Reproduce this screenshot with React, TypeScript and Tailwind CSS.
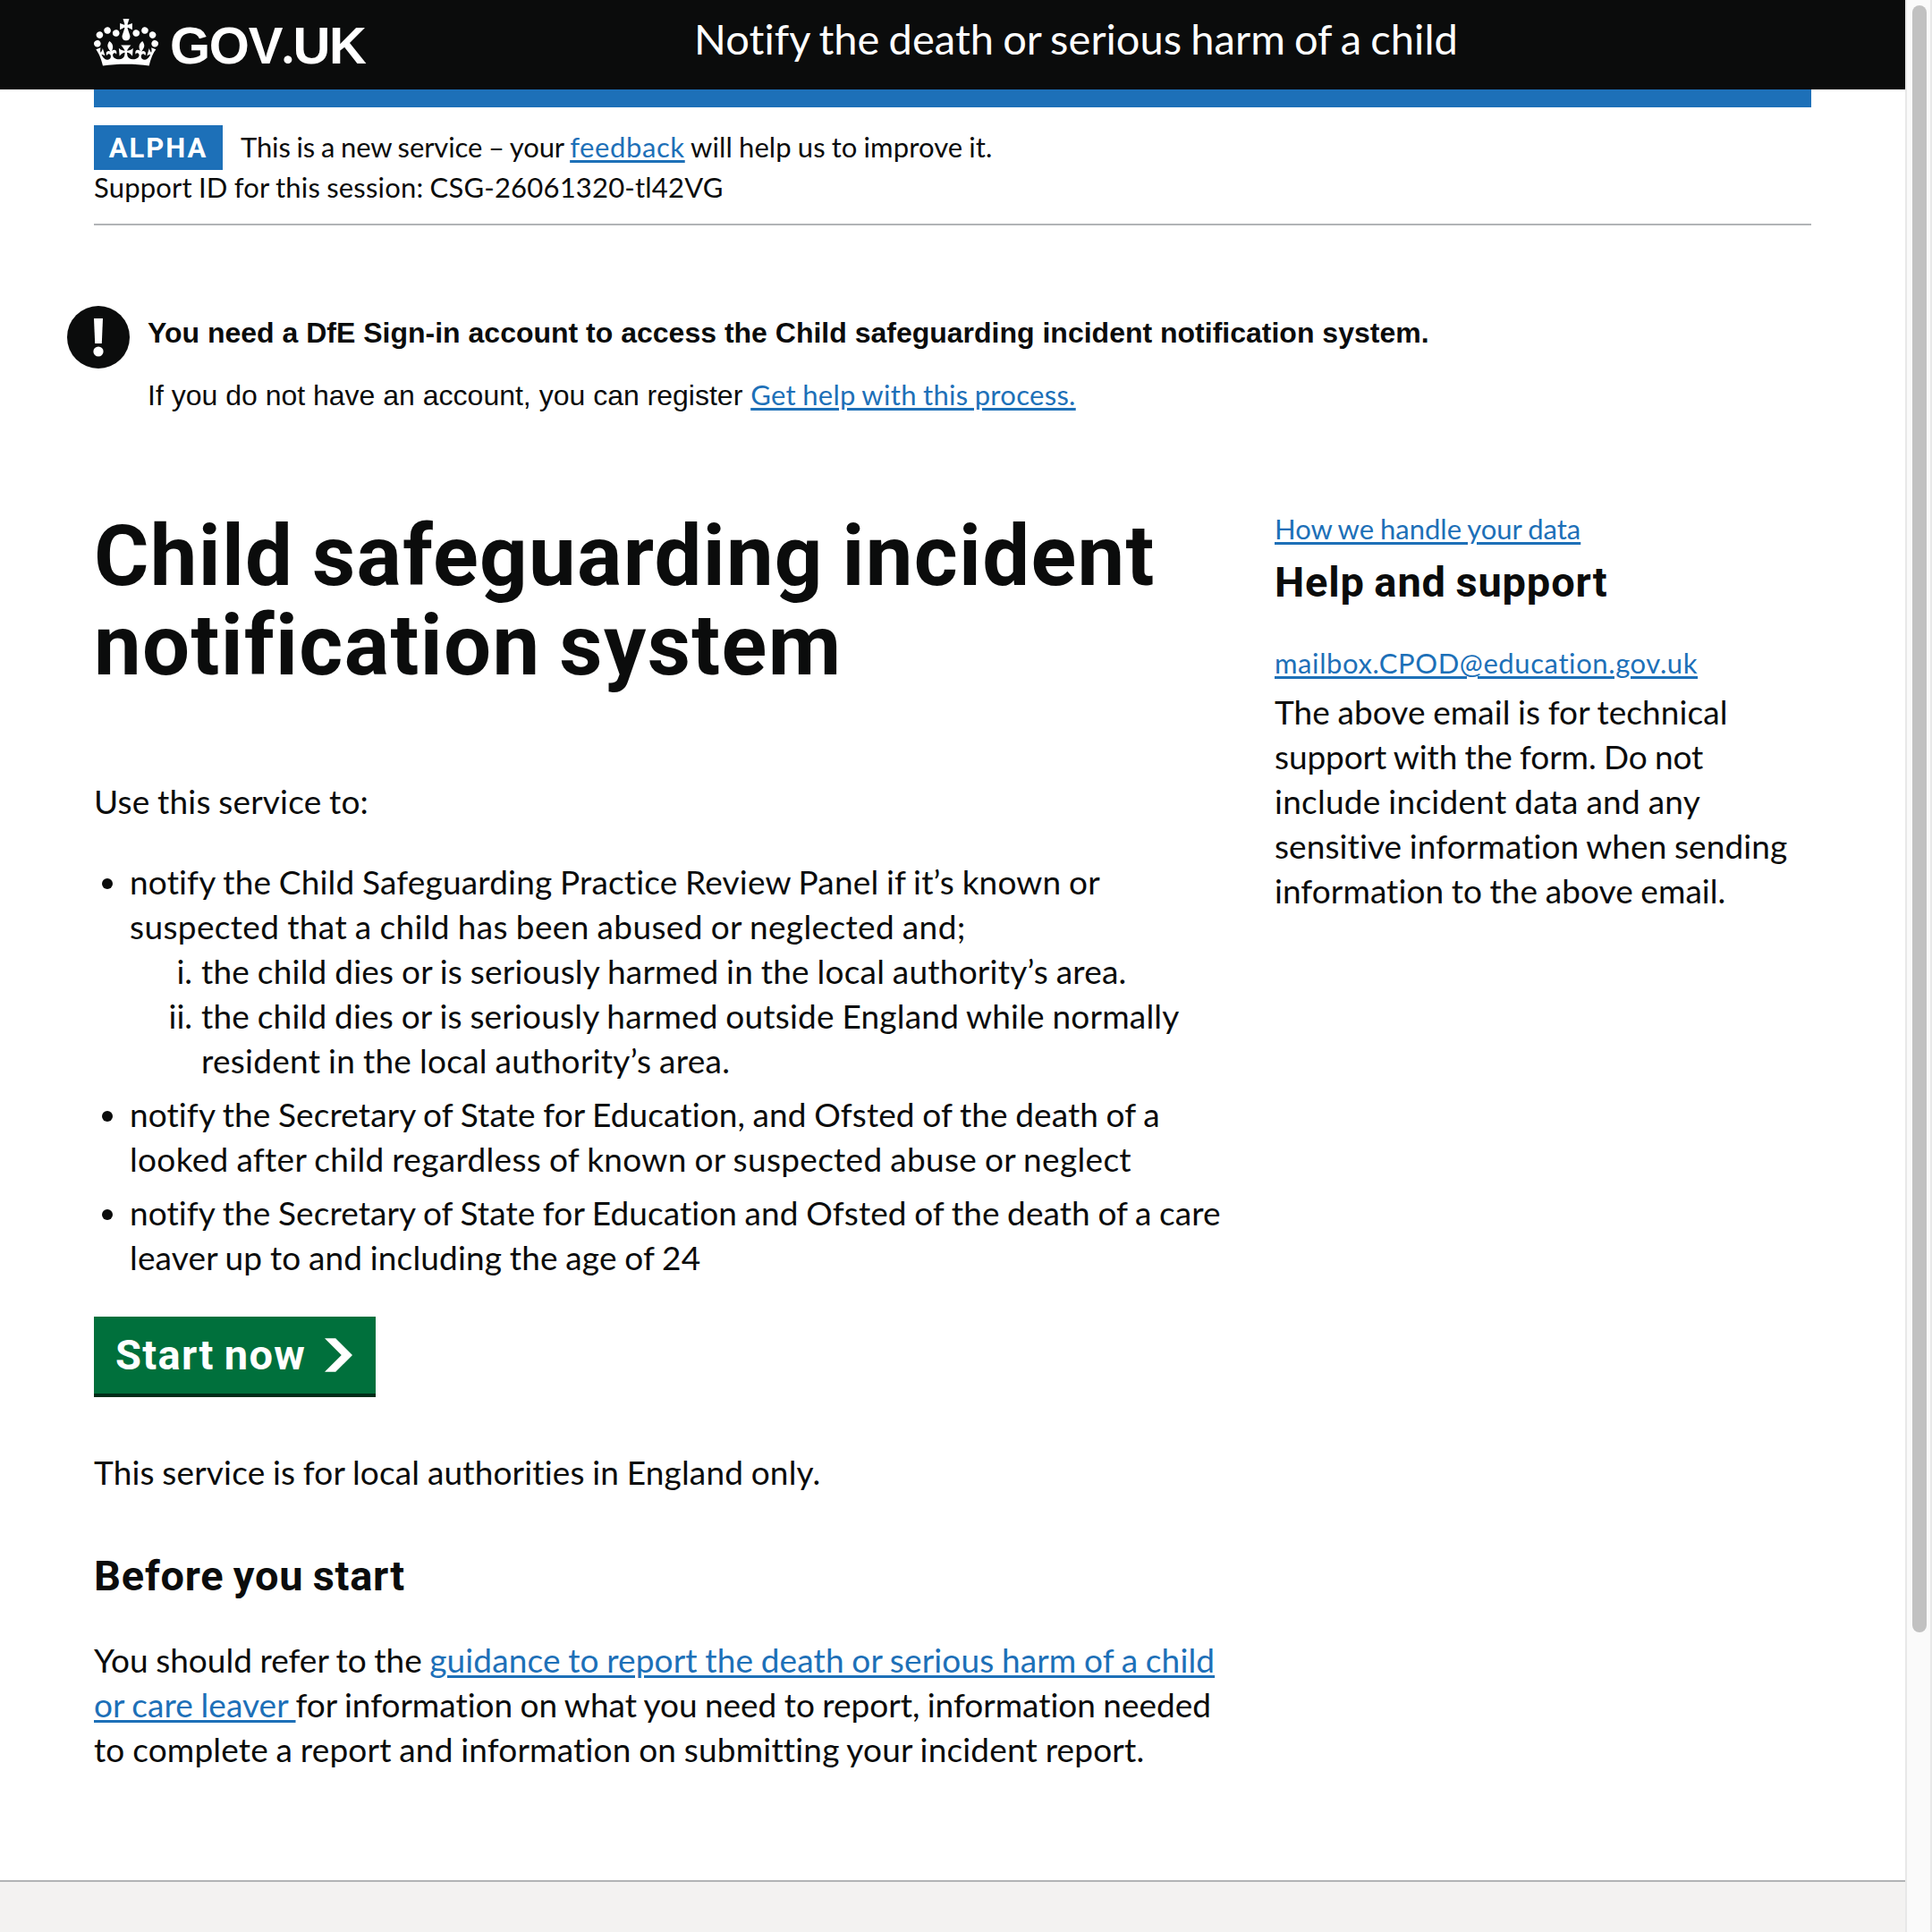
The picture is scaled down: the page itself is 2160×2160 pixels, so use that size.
import type { ReactNode } from "react";

const body = "text-[37px] leading-[50px] [word-spacing:-1px]";
const small = "text-[31px] leading-[40px] [word-spacing:-1px]";
const headingM = "font-['Roboto'] text-[47px] font-bold leading-[50px] [word-spacing:-2px]";
const link =
  "text-[#1d70b8] underline decoration-[3px] underline-offset-[3px] [text-decoration-skip-ink:auto]";

function Line({ track = "", children }: { track?: string; children: ReactNode }) {
  return <span className={`block whitespace-nowrap ${track}`}>{children}</span>;
}

function Crown() {
  return (
    <svg viewBox="0 0 132 97" className="h-[53px] w-[72px]" fill="#ffffff" aria-hidden="true">
      <path
        fillRule="evenodd"
        d="M25 30.2c3.5 1.5 7.7-.2 9.1-3.7 1.5-3.6-.2-7.8-3.9-9.2-3.6-1.4-7.6.3-9.1 3.9-1.4 3.5.3 7.5 3.9 9zM9 39.5c3.6 1.5 7.8-.2 9.2-3.7 1.5-3.6-.2-7.8-3.9-9.1-3.6-1.5-7.6.2-9.1 3.8-1.4 3.5.3 7.5 3.8 9zM4.4 57.2c3.5 1.5 7.7-.2 9.1-3.8 1.5-3.6-.2-7.7-3.9-9.1-3.5-1.5-7.6.3-9.1 3.8-1.4 3.5.3 7.6 3.9 9.1zm38.3-21.4c3.5 1.5 7.7-.2 9.1-3.8 1.5-3.6-.2-7.7-3.9-9.1-3.6-1.5-7.6.3-9.1 3.8-1.3 3.6.4 7.7 3.9 9.1zm64.4-5.6c-3.6 1.5-7.8-.2-9.1-3.7-1.5-3.6.2-7.8 3.8-9.2 3.6-1.4 7.7.3 9.2 3.9 1.3 3.5-.4 7.5-3.9 9zm15.9 9.3c-3.6 1.5-7.7-.2-9.1-3.7-1.5-3.6.2-7.8 3.7-9.1 3.6-1.5 7.7.2 9.2 3.8 1.5 3.5-.3 7.5-3.8 9zm4.7 17.7c-3.6 1.5-7.8-.2-9.2-3.8-1.5-3.6.2-7.7 3.9-9.1 3.6-1.5 7.7.3 9.2 3.8 1.3 3.5-.4 7.6-3.9 9.1zM89.3 35.8c-3.6 1.5-7.8-.2-9.2-3.8-1.4-3.6.2-7.7 3.9-9.1 3.6-1.5 7.7.3 9.2 3.8 1.4 3.6-.3 7.7-3.9 9.1zM69.7 17.7l8.9 4.7V9.3l-8.9 2.8c-.2-.3-.5-.6-.9-.9L72.4 0H59.6l3.5 11.2c-.3.3-.6.5-.9.9l-8.8-2.8v13.1l8.8-4.7c.3.3.6.7.9.9l-5 15.4v.1c-.2.8-.4 1.6-.4 2.4 0 4.1 3.1 7.5 7 8.1h.2c.3 0 .7.1 1 .1.4 0 .7 0 1-.1h.2c4-.6 7.1-4.1 7.1-8.1 0-.8-.1-1.7-.4-2.4V34l-5.1-15.4c.4-.2.7-.6 1-.9zM66 92.8c16.9 0 32.8 1.1 47.1 3.2 4-16.9 8.9-26.7 14-33.5l-9.6-3.4c1 4.9 1.1 7.2 0 10.2-1.5-1.4-3-4.3-4.2-8.7L108.6 76c2.8-2 5-3.2 7.5-3.3-4.4 9.4-10 11.9-13.6 11.2-4.3-.8-6.3-4.6-5.6-7.9 1-4.7 5.7-5.9 8-.5 4.3-8.7-3-11.4-7.6-8.8 7.1-7.2 7.9-13.5 2.1-21.1-8 6.1-8.1 12.3-4.5 20.8-4.7-5.4-12.1-2.5-9.5 6.2 3.4-5.2 7.9-2 7.2 3.1-.6 4.3-6.4 7.8-13.5 7.2-10.3-.9-10.9-8-11.2-13.8 2.5-.5 7.1 1.8 11 7.3L80.2 60c-4.1 4.4-8 5.3-12.3 5.4 1.4-4.4 8-11.6 8-11.6H55.5s6.4 7.2 7.9 11.6c-4.2-.1-8-1-12.3-5.4l1.4 16.4c3.9-5.5 8.5-7.7 10.9-7.3-.3 5.8-.9 12.8-11.1 13.8-7.2.6-12.9-2.9-13.5-7.2-.7-5 3.8-8.3 7.1-3.1 2.7-8.7-4.6-11.6-9.4-6.2 3.7-8.5 3.6-14.7-4.6-20.8-5.8 7.6-5 13.9 2.2 21.1-4.7-2.6-11.9.1-7.7 8.8 2.3-5.5 7.1-4.2 8.1.5.7 3.3-1.3 7.1-5.7 7.9-3.5.7-9-1.8-13.5-11.2 2.5.1 4.7 1.3 7.5 3.3l-4.7-15.4c-1.2 4.4-2.7 7.2-4.3 8.7-1.1-3-.9-5.3 0-10.2l-9.5 3.4c5 6.9 9.9 16.7 14 33.5 14.8-2.1 30.8-3.2 47.7-3.2z"
      />
    </svg>
  );
}

function Header() {
  return (
    <header className="flex h-[100px] items-start bg-[#0b0c0c] pl-[105px] text-white">
      <div className="flex w-[671px] items-start gap-[13px] pt-[21px]">
        <Crown />
        <span className="mt-px whitespace-nowrap font-['Liberation_Sans'] text-[58px] font-bold leading-[58px] tracking-[-1.3px]">
          GOV<span className="font-['Lato'] leading-[0]">.</span>UK
        </span>
      </div>
      <span className="whitespace-nowrap pt-[18px] text-[47px] leading-[50px] tracking-[0.05px] [word-spacing:-2px]">
        Notify the death or serious harm of a child
      </span>
    </header>
  );
}

function PhaseBanner() {
  return (
    <section className="h-[132px] border-b-2 border-[#b1b4b6] pt-5">
      <div className={`flex h-[49px] items-start gap-5 ${small}`}>
        <strong className="flex h-[50px] w-[144px] shrink-0 items-center justify-center bg-[#1d70b8] pt-0.5 font-['Roboto'] font-bold tracking-[2px] text-white">
          ALPHA
        </strong>
        <p className="whitespace-nowrap pt-1">
          <span className="tracking-[-0.13px]">This is a new service – your </span>
          <a className={`tracking-[0.6px] ${link}`}>feedback</a>
          <span className="tracking-[0.1px]"> will help us to improve it.</span>
        </p>
      </div>
      <p className={small}>
        <Line track="tracking-[0.19px]">Support ID for this session: CSG-26061320-tl42VG</Line>
      </p>
    </section>
  );
}

function Warning() {
  return (
    <section className="-ml-[30px] mt-[90px] flex items-start gap-5">
      <svg viewBox="0 0 70 70" className="size-[70px]" aria-hidden="true">
        <circle cx="35" cy="35" r="35" fill="#0b0c0c" />
        <path d="M30 14h10l-1.2 28h-7.6z" fill="#ffffff" />
        <circle cx="35" cy="51" r="5.6" fill="#ffffff" />
      </svg>
      <div className="flex flex-col gap-[29px] pt-2.5 font-['Liberation_Sans'] text-[32px] leading-[40px]">
        <p className="font-bold">
          <Line>You need a DfE Sign-in account to access the Child safeguarding incident notification system.</Line>
        </p>
        <p>
          <Line>
            If you do not have an account, you can register{" "}
            <a className={`font-['Lato'] text-[31px] tracking-[0.3px] [word-spacing:-1px] ${link}`}>
              Get help with this process.
            </a>
          </Line>
        </p>
      </div>
    </section>
  );
}

function Bullet({ children }: { children: ReactNode }) {
  return (
    <li className="flex">
      <span className="ml-[9px] mr-[19px] mt-[21px] h-3 w-3 shrink-0 rounded-full bg-[#0b0c0c]" />
      <div>{children}</div>
    </li>
  );
}

function Numeral({ mark, children }: { mark: string; children: ReactNode }) {
  return (
    <li className="flex">
      <span className="w-[70px] shrink-0 text-right">{mark}</span>
      <div className="pl-2.5">{children}</div>
    </li>
  );
}

function MainColumn() {
  return (
    <div className={`w-[1320px] ${body}`}>
      <h1 className="mt-1 font-['Roboto'] text-[94px] font-bold leading-[100px] [word-spacing:-4px]">
        <Line track="tracking-[1.3px]">Child safeguarding incident</Line>
        <Line track="tracking-[1.4px]">notification system</Line>
      </h1>
      <p className="mt-[99px]">
        <Line track="tracking-[0.18px]">Use this service to:</Line>
      </p>
      <ul className="mt-10 flex flex-col gap-2.5">
        <Bullet>
          <Line track="tracking-[0.17px]">notify the Child Safeguarding Practice Review Panel if it’s known or</Line>
          <Line track="tracking-[0.37px]">suspected that a child has been abused or neglected and;</Line>
          <ol>
            <Numeral mark="i.">
              <Line track="tracking-[0.22px]">the child dies or is seriously harmed in the local authority’s area.</Line>
            </Numeral>
            <Numeral mark="ii.">
              <Line track="tracking-[0.2px]">the child dies or is seriously harmed outside England while normally</Line>
              <Line track="tracking-[0.28px]">resident in the local authority’s area.</Line>
            </Numeral>
          </ol>
        </Bullet>
        <Bullet>
          <Line track="tracking-[0.1px]">notify the Secretary of State for Education, and Ofsted of the death of a</Line>
          <Line track="tracking-[0.32px]">looked after child regardless of known or suspected abuse or neglect</Line>
        </Bullet>
        <Bullet>
          <Line track="tracking-[0.09px]">notify the Secretary of State for Education and Ofsted of the death of a care</Line>
          <Line track="tracking-[0.15px]">leaver up to and including the age of 24</Line>
        </Bullet>
      </ul>
      <button
        className={`mt-[41px] flex h-[90px] w-[315px] items-center gap-[21px] border-b-4 border-[#002d18] bg-[#00703c] pl-6 tracking-[1.3px] text-white ${headingM}`}
      >
        <span className="whitespace-nowrap">Start now</span>
        <svg viewBox="0 0 33 40" className="h-[38px] w-[31px]" fill="#ffffff" aria-hidden="true">
          <path d="M0 0h13l20 20-20 20H0l20-20z" />
        </svg>
      </button>
      <p className="mt-[59px]">
        <Line track="tracking-[0.16px]">This service is for local authorities in England only.</Line>
      </p>
      <h2 className={`mt-[66px] tracking-[0.75px] ${headingM}`}>Before you start</h2>
      <p className="mt-11">
        <Line>
          <span className="tracking-[0.01px]">You should refer to the </span>
          <a className={`tracking-[0.13px] ${link}`}>guidance to report the death or serious harm of a child</a>
        </Line>
        <Line>
          <a className={`whitespace-pre tracking-[0.07px] ${link}`}>{"or care leaver "}</a>
          <span className="tracking-[-0.02px]">for information on what you need to report, information needed</span>
        </Line>
        <Line track="tracking-[0.18px]">to complete a report and information on submitting your incident report.</Line>
      </p>
    </div>
  );
}

function SideColumn() {
  return (
    <aside className="pt-[3px]">
      <p className={small}>
        <Line>
          <a className={link}>How we handle your data</a>
        </Line>
      </p>
      <h2 className={`mt-[15px] tracking-[0.85px] ${headingM}`}>Help and support</h2>
      <p className={`mt-[45px] ${small}`}>
        <Line track="tracking-[0.6px]">
          <a className={link}>mailbox.CPOD@education.gov.uk</a>
        </Line>
      </p>
      <p className={`mt-2.5 ${body}`}>
        <Line track="tracking-[0.08px]">The above email is for technical</Line>
        <Line track="tracking-[-0.1px]">support with the form. Do not</Line>
        <Line track="tracking-[0.26px]">include incident data and any</Line>
        <Line track="tracking-[0.1px]">sensitive information when sending</Line>
        <Line track="tracking-[0.07px]">information to the above email.</Line>
      </p>
    </aside>
  );
}

export default function App() {
  return (
    <div className="flex h-[2160px] w-[2160px] overflow-hidden bg-white font-['Lato',sans-serif] text-[#0b0c0c] [font-variant-ligatures:none]">
      <div className="flex w-[2130px] flex-col">
        <Header />
        <main className="mx-[105px] h-[2002px] border-t-[20px] border-[#1d70b8]">
          <PhaseBanner />
          <Warning />
          <div className="mt-[106px] flex">
            <MainColumn />
            <SideColumn />
          </div>
        </main>
        <footer className="h-[58px] border-t-2 border-[#b1b4b6] bg-[#f3f2f1]" />
      </div>
      <div className="w-[30px] border-x-2 border-[#e8e8e8] bg-[#fafafa] pl-1.5 pt-1.5">
        <div className="h-[1819px] w-4 rounded-full bg-[#c1c1c1]" />
      </div>
    </div>
  );
}
